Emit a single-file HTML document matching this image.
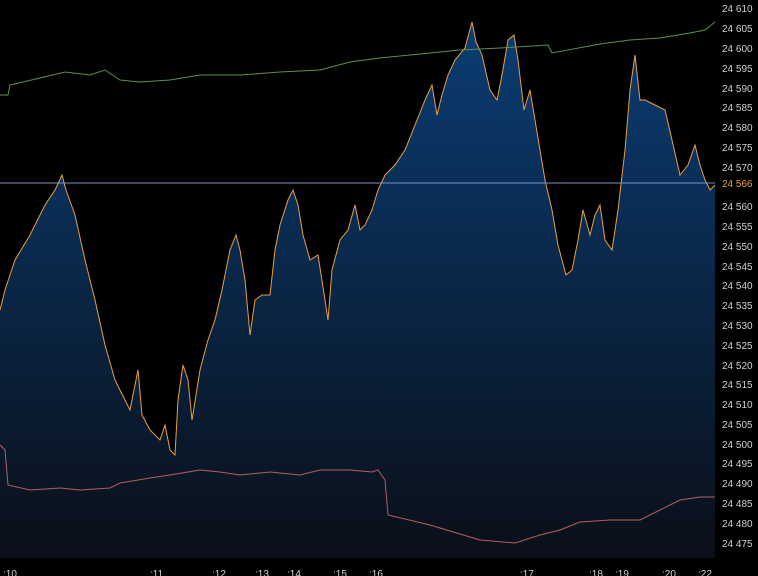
<!DOCTYPE html>
<html><head><meta charset="utf-8"><style>
html,body{margin:0;padding:0;background:#000;width:758px;height:576px;overflow:hidden}
svg{display:block}
text{font-family:"Liberation Sans",sans-serif;font-size:10px;fill:#d0d0d0}
</style></head><body>
<svg width="758" height="576" viewBox="0 0 758 576">
<defs>
<linearGradient id="g" x1="0" x2="0" y1="20" y2="558" gradientUnits="userSpaceOnUse">
<stop offset="0" stop-color="#0b3d74"/>
<stop offset="0.5" stop-color="#0a2646"/>
<stop offset="1" stop-color="#0b0f18"/>
</linearGradient>
</defs>
<rect width="758" height="576" fill="#000"/>
<path fill="url(#g)" stroke="none" d="M0,558 L0,310 L5,290 L15,260 L30,235 L45,205 L55,190 L62,175 L66,190 L75,215 L85,260 L95,300 L105,345 L115,380 L125,400 L130,410 L135,385 L138,370 L142,415 L150,430 L160,440 L165,425 L170,450 L175,455 L178,400 L183,365 L188,380 L192,420 L196,395 L200,370 L208,340 L215,320 L222,290 L230,250 L236,235 L240,250 L245,280 L250,335 L255,300 L262,295 L270,295 L275,250 L280,225 L288,200 L293,190 L298,205 L303,235 L310,260 L318,255 L325,300 L328,320 L332,270 L340,240 L348,230 L355,205 L360,230 L365,225 L372,210 L378,190 L385,175 L395,165 L405,150 L415,125 L425,100 L432,85 L437,115 L442,95 L448,75 L455,60 L465,48 L472,22 L476,42 L482,55 L490,90 L497,100 L502,75 L508,40 L514,35 L518,60 L524,110 L530,90 L535,120 L540,150 L545,180 L552,210 L558,245 L566,275 L572,270 L578,240 L583,210 L590,235 L595,215 L600,205 L605,240 L612,250 L618,210 L625,150 L630,90 L635,55 L640,100 L645,100 L655,105 L665,110 L672,140 L680,175 L688,165 L695,145 L700,165 L705,180 L710,190 L715,185 L715,558 Z"/>
<path fill="none" stroke="#e8a040" stroke-width="1" d="M0,310 L5,290 L15,260 L30,235 L45,205 L55,190 L62,175 L66,190 L75,215 L85,260 L95,300 L105,345 L115,380 L125,400 L130,410 L135,385 L138,370 L142,415 L150,430 L160,440 L165,425 L170,450 L175,455 L178,400 L183,365 L188,380 L192,420 L196,395 L200,370 L208,340 L215,320 L222,290 L230,250 L236,235 L240,250 L245,280 L250,335 L255,300 L262,295 L270,295 L275,250 L280,225 L288,200 L293,190 L298,205 L303,235 L310,260 L318,255 L325,300 L328,320 L332,270 L340,240 L348,230 L355,205 L360,230 L365,225 L372,210 L378,190 L385,175 L395,165 L405,150 L415,125 L425,100 L432,85 L437,115 L442,95 L448,75 L455,60 L465,48 L472,22 L476,42 L482,55 L490,90 L497,100 L502,75 L508,40 L514,35 L518,60 L524,110 L530,90 L535,120 L540,150 L545,180 L552,210 L558,245 L566,275 L572,270 L578,240 L583,210 L590,235 L595,215 L600,205 L605,240 L612,250 L618,210 L625,150 L630,90 L635,55 L640,100 L645,100 L655,105 L665,110 L672,140 L680,175 L688,165 L695,145 L700,165 L705,180 L710,190 L715,185"/>
<path fill="none" stroke="#5f8f4a" stroke-width="1" d="M0,95 L8,95 L10,85 L40,78 L65,72 L90,75 L105,70 L120,80 L140,82 L170,80 L200,75 L240,75 L280,72 L320,70 L350,62 L380,58 L420,54 L460,50 L500,48 L548,45 L552,53 L600,44 L630,40 L660,38 L690,33 L705,30 L715,22"/>
<path fill="none" stroke="#b06060" stroke-width="1" d="M0,445 L5,450 L8,485 L30,490 L60,488 L80,490 L110,488 L120,483 L150,478 L170,475 L200,470 L220,472 L240,475 L270,472 L300,475 L320,470 L350,470 L372,472 L378,470 L385,480 L388,515 L430,525 L480,540 L515,543 L540,535 L560,530 L580,522 L610,520 L640,520 L660,510 L680,500 L700,497 L715,497"/>
<line x1="0" y1="183" x2="715" y2="183" stroke="#7890c8" stroke-width="1"/>
<g text-anchor="start">
<text x="722" y="12">24 610</text><text x="722" y="32">24 605</text><text x="722" y="52">24 600</text><text x="722" y="72">24 595</text><text x="722" y="92">24 590</text><text x="722" y="111">24 585</text><text x="722" y="131">24 580</text><text x="722" y="151">24 575</text><text x="722" y="171">24 570</text>
<text x="722" y="187" style="fill:#e8a040">24 566</text>
<text x="722" y="210">24 560</text><text x="722" y="230">24 555</text><text x="722" y="250">24 550</text><text x="722" y="270">24 545</text><text x="722" y="289">24 540</text><text x="722" y="309">24 535</text><text x="722" y="329">24 530</text><text x="722" y="349">24 525</text><text x="722" y="369">24 520</text><text x="722" y="388">24 515</text><text x="722" y="408">24 510</text><text x="722" y="428">24 505</text><text x="722" y="448">24 500</text><text x="722" y="467">24 495</text><text x="722" y="487">24 490</text><text x="722" y="507">24 485</text><text x="722" y="527">24 480</text><text x="722" y="547">24 475</text>
</g>
<g>
<text x="3" y="577">:10</text><text x="150" y="577">:11</text><text x="212" y="577">:12</text><text x="255" y="577">:13</text><text x="287" y="577">:14</text><text x="333" y="577">:15</text><text x="369" y="577">:16</text><text x="520" y="577">:17</text><text x="589" y="577">:18</text><text x="615" y="577">:19</text><text x="662" y="577">:20</text><text x="698" y="577">:22</text>
</g>
</svg>
</body></html>
